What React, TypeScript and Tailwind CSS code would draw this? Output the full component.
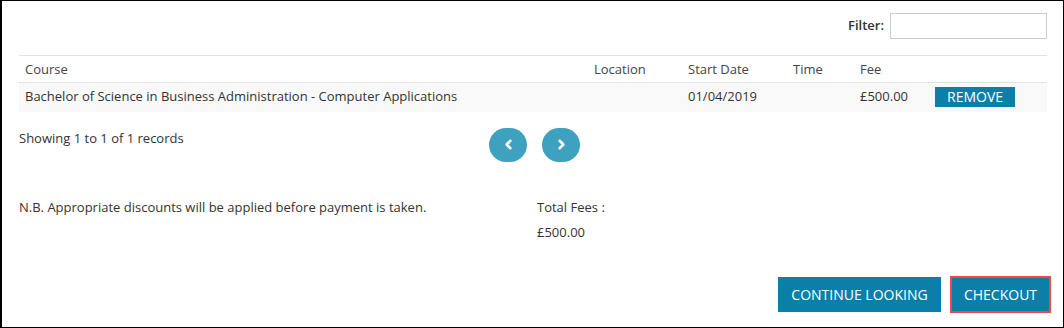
import { ChevronLeft, ChevronRight } from "lucide-react";

const cols = [
  { label: "Course", w: "w-[569px]" },
  { label: "Location", w: "w-[94px]" },
  { label: "Start Date", w: "w-[105px]" },
  { label: "Time", w: "w-[67px]" },
  { label: "Fee", w: "w-[75px]" },
  { label: "", w: "w-[118px]" },
];

export default function App() {
  return (
    <div className="w-[1064px] h-[328px] bg-white border-t border-r border-b border-l-2 border-black font-['Open_Sans',sans-serif] text-[13px] text-[#333]">
      <div className="pl-[17px] pr-[15px] pt-[12px]">
        {/* Filter */}
        <div className="flex justify-end items-center gap-[6px] pr-[1px]">
          <label className="font-semibold text-[#333]">Filter:</label>
          <input className="w-[157px] h-[26px] border border-[#ccc] outline-none" />
        </div>

        {/* Table */}
        <table className="mt-[16px] w-[1028px] table-fixed border-collapse">
          <thead>
            <tr className="border-t border-b border-[#e2e2e2] h-[27px]">
              {cols.map((c) => (
                <th key={c.label} className={`${c.w} text-left font-medium px-[6px] pt-[1px] text-[#444]`}>
                  {c.label}
                </th>
              ))}
            </tr>
          </thead>
          <tbody>
            <tr className="bg-[#f9f9f9] h-[29px]">
              <td className="px-[6px] pb-[1px]">Bachelor of Science in Business Administration - Computer Applications</td>
              <td className="px-[6px]"></td>
              <td className="px-[6px] pb-[1px]">01/04/2019</td>
              <td className="px-[6px]"></td>
              <td className="px-[6px] pb-[1px]">£500.00</td>
              <td className="px-[6px]">
                <button className="w-[80px] h-[20px] bg-[#0b7fa8] text-white text-[14px] leading-none uppercase">
                  Remove
                </button>
              </td>
            </tr>
          </tbody>
        </table>

        {/* Pagination */}
        <div className="relative h-[60px]">
          <div className="pt-[17px]">Showing 1 to 1 of 1 records</div>
          <div className="absolute left-[470px] top-[16px] flex gap-[15px]">
            <button className="w-[38px] h-[34px] rounded-full bg-[#3fa1c0] flex items-center justify-center text-white">
              <ChevronLeft size={15} strokeWidth={4} />
            </button>
            <button className="w-[38px] h-[34px] rounded-full bg-[#3fa1c0] flex items-center justify-center text-white">
              <ChevronRight size={15} strokeWidth={4} />
            </button>
          </div>
        </div>

        {/* Totals */}
        <div className="flex mt-[26px]">
          <div className="w-[518px]">N.B. Appropriate discounts will be applied before payment is taken.</div>
          <div>
            <div>Total Fees :</div>
            <div className="mt-[6px]">£500.00</div>
          </div>
        </div>

        {/* Actions */}
        <div className="flex justify-end gap-[9px] mt-[33px] -mr-[3px]">
          <button className="w-[163px] h-[35px] bg-[#0b7fa8] text-white text-[14px] uppercase mt-[1px] -ml-[1px]">
            Continue Looking
          </button>
          <button className="w-[101px] h-[37px] bg-[#0b7fa8] text-white text-[14px] uppercase border-2 border-[#f04848]">
            Checkout
          </button>
        </div>
      </div>
    </div>
  );
}
